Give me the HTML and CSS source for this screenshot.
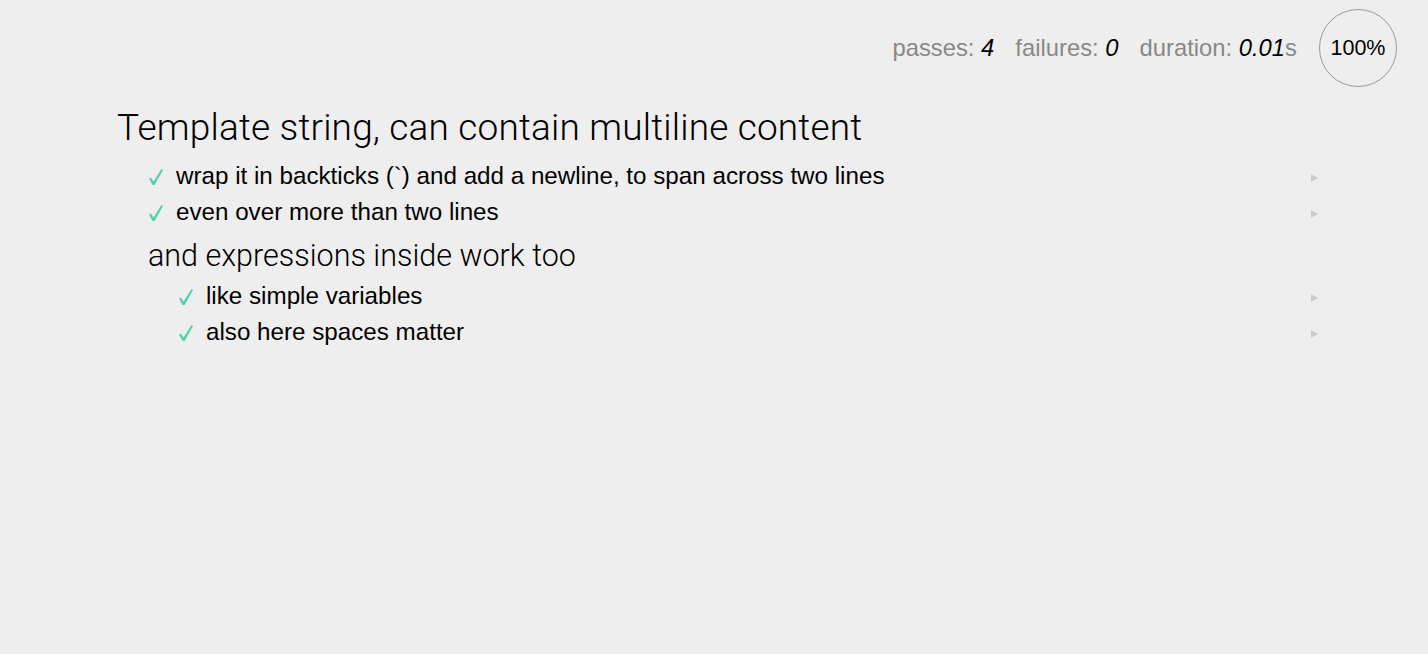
FILE: index.html
```html
<!DOCTYPE html>
<html>
<head>
<meta charset="utf-8">
<link rel="stylesheet" href="styles.css">
</head>
<body>
<div class="mocha">
  <ul class="stats">
    <li class="stat">passes: <em>4</em></li>
    <li class="stat">failures: <em>0</em></li>
    <li class="stat">duration: <em>0.01</em>s</li>
    <li class="progress"><span>100%</span></li>
  </ul>
  <ul class="report">
    <li class="suite">
      <h1 class="suite-title">Template string, can contain multiline content</h1>
      <ul class="tests">
        <li class="test">
          <svg class="check" viewBox="0 0 14 16" width="14" height="16"><polygon points="0,9.6 1.8,8.6 4.6,12.6 12.4,0 14,1 5.6,16 3.6,16"/></svg>
          <h2 class="test-title">wrap it in backticks (`) and add a newline, to span across two lines</h2>
          <svg class="replay" viewBox="0 0 7 8" width="7" height="8"><polygon points="0,0 7,4 0,8"/></svg>
        </li>
        <li class="test">
          <svg class="check" viewBox="0 0 14 16" width="14" height="16"><polygon points="0,9.6 1.8,8.6 4.6,12.6 12.4,0 14,1 5.6,16 3.6,16"/></svg>
          <h2 class="test-title">even over more than two lines</h2>
          <svg class="replay" viewBox="0 0 7 8" width="7" height="8"><polygon points="0,0 7,4 0,8"/></svg>
        </li>
        <li class="suite nested">
          <h1 class="suite-title small">and expressions inside work too</h1>
          <ul class="tests">
            <li class="test">
              <svg class="check" viewBox="0 0 14 16" width="14" height="16"><polygon points="0,9.6 1.8,8.6 4.6,12.6 12.4,0 14,1 5.6,16 3.6,16"/></svg>
              <h2 class="test-title">like simple variables</h2>
              <svg class="replay" viewBox="0 0 7 8" width="7" height="8"><polygon points="0,0 7,4 0,8"/></svg>
            </li>
            <li class="test">
              <svg class="check" viewBox="0 0 14 16" width="14" height="16"><polygon points="0,9.6 1.8,8.6 4.6,12.6 12.4,0 14,1 5.6,16 3.6,16"/></svg>
              <h2 class="test-title">also here spaces matter</h2>
              <svg class="replay" viewBox="0 0 7 8" width="7" height="8"><polygon points="0,0 7,4 0,8"/></svg>
            </li>
          </ul>
        </li>
      </ul>
    </li>
  </ul>
</div>
</body>
</html>
```
FILE: styles.css
```css
html, body {
  margin: 0;
  padding: 0;
  background: #eeeeee;
}
body {
  font-family: "Liberation Sans", Arial, sans-serif;
  color: #000;
  height: 654px;
  overflow: hidden;
}
ul {
  list-style: none;
  margin: 0;
  padding: 0;
}
.mocha {
  padding: 9px 31px 0 117px;
}
.stats {
  display: flex;
  justify-content: flex-end;
  align-items: center;
  height: 78px;
  font-size: 23.8px;
  color: #888;
}
.stat {
  margin-right: 21px;
}
.stat em {
  color: #000;
  font-style: italic;
}
.progress {
  width: 76px;
  height: 76px;
  border: 1.5px solid #999;
  border-radius: 50%;
  display: flex;
  align-items: center;
  justify-content: center;
  font-size: 21.5px;
  color: #000;
  margin-left: 1px;
}
.report {
  margin-top: 11px;
  margin-right: 79px;
}
.suite-title {
  margin: 0;
  font-family: Roboto, "Liberation Sans", sans-serif;
  font-weight: 300;
  font-size: 37px;
  letter-spacing: 0.17px;
  line-height: 60px;
  color: #000;
}
.suite-title.small {
  font-size: 30.5px;
  letter-spacing: 0;
  line-height: 44px;
  padding-top: 4px;
}
.tests {
  padding-left: 31px;
}
.nested .tests {
  padding-left: 30px;
}
.test {
  display: flex;
  align-items: center;
  height: 36px;
}
.check {
  fill: #4fd2ae;
  flex: none;
  margin-right: 13px;
  margin-left: 1px;
  margin-top: 1px;
}
.test-title {
  margin: 0;
  flex: 1;
  font-size: 24.2px;
  font-weight: normal;
}
.replay {
  flex: none;
  fill: #cccccc;
  margin-top: 4px;
}
```
